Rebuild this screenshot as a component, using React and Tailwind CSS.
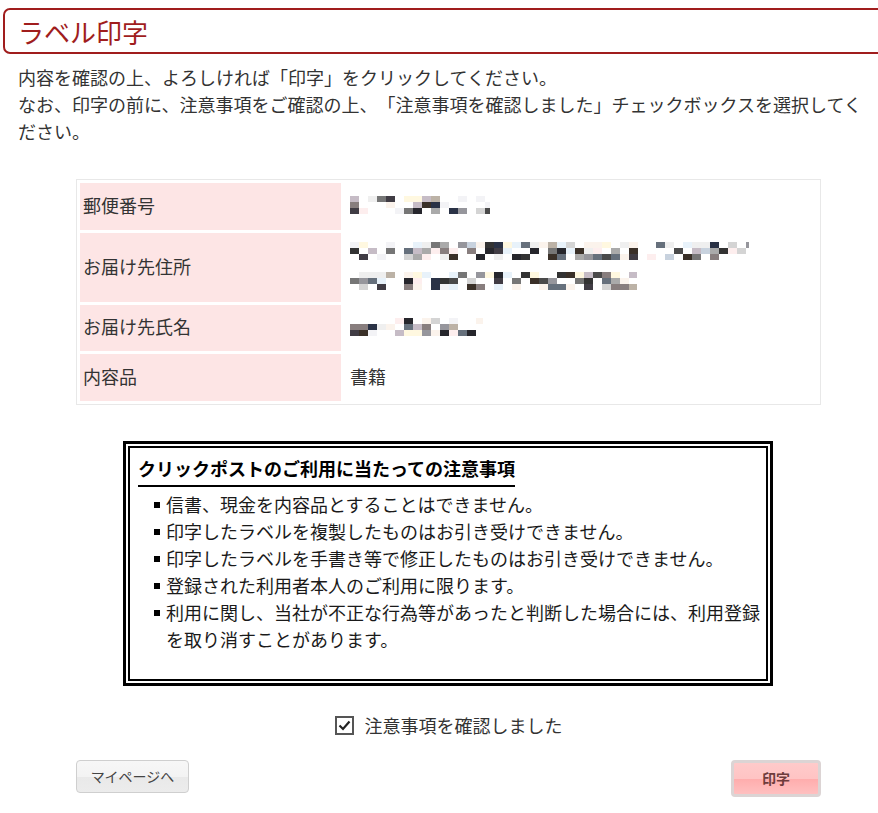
import React from "react";

function makeRand(seed) {
  let s = seed;
  return () => {
    s = (s * 1103515245 + 12345) & 0x7fffffff;
    return s / 0x7fffffff;
  };
}

const LIGHT = ["#f3f3f6", "#fbf3ec", "#e8f2fa", "#fdeeee", "#efefef", "#fff8e0"];
const MID = ["#d4d4d4", "#c6bcc6", "#bcb2a6", "#c8d2de", "#aaaaaa"];
const DARK = ["#333333", "#26262c", "#403c44", "#4a4a4a", "#3a3028", "#2a3246"];
const GRAY = ["#767676", "#66707c", "#887e7e", "#96969c"];

function Mosaic({ w, seed }) {
  const rnd = makeRand(seed);
  const cw = 9;
  const ch = 6;
  const cols = Math.ceil(w / cw);
  const rects = [];
  for (let r = 0; r < 3; r++) {
    for (let c = 0; c < cols; c++) {
      const v = rnd();
      let fill = null;
      if (v < 0.34) fill = null;
      else if (v < 0.52) fill = LIGHT[Math.floor(rnd() * LIGHT.length)];
      else if (v < 0.66) fill = MID[Math.floor(rnd() * MID.length)];
      else if (v < 0.79) fill = GRAY[Math.floor(rnd() * GRAY.length)];
      else fill = DARK[Math.floor(rnd() * DARK.length)];
      if (r === 0 && fill && rnd() < 0.45) fill = LIGHT[Math.floor(rnd() * LIGHT.length)];
      if (fill) rects.push(<rect key={r + "-" + c} x={c * cw} y={r * ch} width={cw} height={ch} fill={fill} />);
    }
  }
  return (
    <svg width={w} height={18} className="block">
      {rects}
    </svg>
  );
}

const items = [
  "信書、現金を内容品とすることはできません。",
  "印字したラベルを複製したものはお引き受けできません。",
  "印字したラベルを手書き等で修正したものはお引き受けできません。",
  "登録された利用者本人のご利用に限ります。",
];

export default function App() {
  return (
    <div className="min-h-screen bg-white overflow-hidden text-[#333] [text-spacing-trim:space-all] font-['Noto_Sans_CJK_JP','Noto_Sans',sans-serif]">
      <div className="mt-[8px] ml-[3px] -mr-[20px] h-[46px] border-2 border-[#a01d1d] rounded-[7px] flex items-center pl-[13px]">
        <span className="text-[26px] leading-none text-[#a01d1d] pt-[1px]">ラベル印字</span>
      </div>

      <p className="mt-[10px] px-[18px] text-[18px] leading-[27px] whitespace-nowrap">
        内容を確認の上、よろしければ「印字」をクリックしてください。
        <br />
        なお、印字の前に、注意事項をご確認の上、「注意事項を確認しました」チェックボックスを選択してく
        <br />
        ださい。
      </p>

      <div className="mt-[34px] ml-[76px] w-[745px]">
        <table className="w-full border-separate border-spacing-[3px] border border-[#e8e8e8] text-[18px] leading-[27px]">
          <tbody>
            <tr>
              <td className="h-[47px] w-[261px] bg-[#fde5e5] pl-[3px] pb-[3px] align-middle">郵便番号</td>
              <td className="pl-[6px] pb-[3px] align-middle">
                <Mosaic w={140} seed={11} />
              </td>
            </tr>
            <tr>
              <td className="h-[69px] w-[261px] bg-[#fde5e5] pl-[3px] pb-[3px] align-middle">お届け先住所</td>
              <td className="pl-[6px] pb-[3px] align-middle">
                <div className="flex flex-col gap-[12px]">
                  <Mosaic w={399} seed={23} />
                  <Mosaic w={287} seed={37} />
                </div>
              </td>
            </tr>
            <tr>
              <td className="h-[46px] w-[261px] bg-[#fde5e5] pl-[3px] pb-[3px] align-middle">お届け先氏名</td>
              <td className="pl-[6px] pb-[3px] align-middle">
                <Mosaic w={133} seed={51} />
              </td>
            </tr>
            <tr>
              <td className="h-[47px] w-[261px] bg-[#fde5e5] pl-[3px] pb-[3px] align-middle">内容品</td>
              <td className="pl-[6px] pb-[3px] align-middle">書籍</td>
            </tr>
          </tbody>
        </table>
      </div>

      <div className="mt-[36px] ml-[123px] w-[650px] border-[3px] border-black p-[2px]">
        <div className="border-2 border-black pt-[7px] pl-[8px] pr-[4px] pb-[26px] text-[18px] leading-[27px] text-[#1a1a1a]">
          <div className="inline-block border-b-2 border-black pb-[3px] font-bold text-black">
            クリックポストのご利用に当たっての注意事項
          </div>
          <ul className="mt-[4px]">
            {items.map((t) => (
              <li key={t} className="flex items-start whitespace-nowrap">
                <span className="mt-[11px] ml-[16px] mr-[6px] w-[6px] h-[6px] bg-black shrink-0" />
                <span>{t}</span>
              </li>
            ))}
            <li className="flex items-start whitespace-nowrap">
              <span className="mt-[11px] ml-[16px] mr-[6px] w-[6px] h-[6px] bg-black shrink-0" />
              <span>
                利用に関し、当社が不正な行為等があったと判断した場合には、利用登録
                <br />
                を取り消すことがあります。
              </span>
            </li>
          </ul>
        </div>
      </div>

      <div className="mt-[26px] ml-[76px] w-[745px] flex justify-center items-center gap-[11px]">
        <div className="w-[19px] h-[19px] border-2 border-[#555] flex items-center justify-center bg-white">
          <svg width="13" height="11" viewBox="0 0 13 11">
            <path d="M1.5 5.5 L5 9 L11.5 1.5" fill="none" stroke="#222" strokeWidth="2.2" />
          </svg>
        </div>
        <span className="text-[18px] leading-[27px]">注意事項を確認しました</span>
      </div>

      <div className="mt-[21px] ml-[76px] w-[745px] flex justify-between items-start">
        <button className="w-[113px] h-[33px] border border-[#cfcfcf] rounded-[4px] bg-[linear-gradient(#f7f7f7_0%,#f3f3f3_50%,#e9e9e9_52%,#ececec_100%)] text-[14px] text-[#444] flex items-center justify-center">
          マイページへ
        </button>
        <button className="w-[90px] h-[37px] border-[3px] border-[#dcd4d4] rounded-[4px] bg-[linear-gradient(#ffcaca_0%,#ffc4c4_50%,#ffadad_52%,#ffc0c0_100%)] text-[14px] font-bold text-[#6e3c3c] flex items-center justify-center">
          印字
        </button>
      </div>
    </div>
  );
}
